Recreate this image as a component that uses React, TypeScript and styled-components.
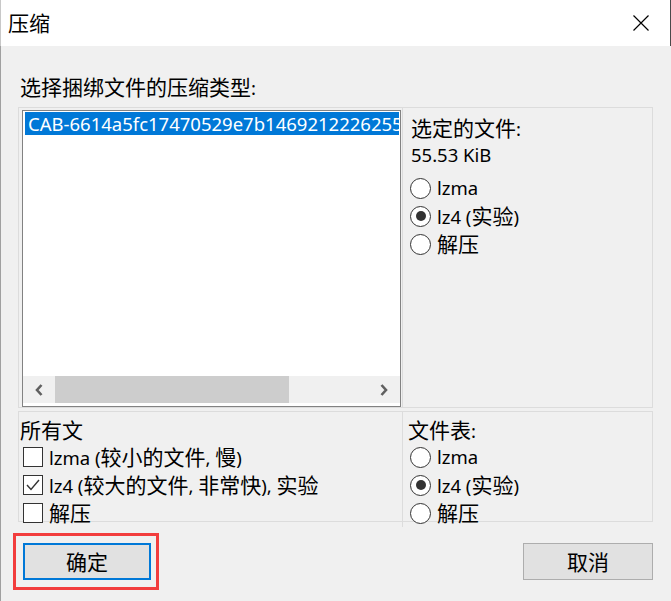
import React from "react";
import styled, { createGlobalStyle } from "styled-components";

const GlobalStyle = createGlobalStyle`
  html, body { margin: 0; padding: 0; background: #f0f0f0; }
  body { font-family: "Noto Sans", "Noto Sans CJK SC", sans-serif; }
  * { box-sizing: border-box; }
`;

const Window = styled.div`
  width: 671px;
  height: 601px;
  display: flex;
  flex-direction: column;
  background: #f0f0f0;
  overflow: hidden;
  font-family: "Noto Sans", "Noto Sans CJK SC", sans-serif;
  font-size: 18.5px;
  color: #000;
`;

const Cjk = styled.span`
  font-family: "Noto Sans CJK SC", sans-serif;
  font-size: 21px;
`;

const Mixed = ({ text }: { text: string }) => (
  <>
    {text
      .split(/([\u3000-\u9fff\uff00-\uffef]+)/)
      .map((part, i) => (i % 2 === 1 ? <Cjk key={i}>{part}</Cjk> : part))}
  </>
);

const TitleBar = styled.div`
  height: 46px;
  flex: none;
  background: #fff;
  display: flex;
  align-items: center;
  justify-content: space-between;
  padding-left: 7px;
  padding-right: 21px;
  border-left: 1px solid #c8c8c8;
  border-right: 1px solid #4a4a4a;
`;

const Title = styled.span`
  line-height: 28px;
`;

const Body = styled.div`
  flex: 1;
  display: flex;
  flex-direction: column;
  padding: 0 18px 0 17px;
  border-left: 1px solid #a0a0a0;
`;

const Label = styled.div`
  margin-top: 26px;
  padding-left: 2px;
  line-height: 28px;
  height: 28px;
`;

const Group = styled.div<{ $height: number; $top: number }>`
  margin-top: ${(p) => p.$top}px;
  height: ${(p) => p.$height}px;
  display: grid;
  grid-template-columns: 383px 1fr;
  border: 1px solid #dcdcdc;
`;

const ListBox = styled.div`
  margin: 2px 1px 0 3px;
  border: 1px solid #828282;
  background: #fff;
  display: flex;
  flex-direction: column;
  min-width: 0;
  overflow: hidden;
`;

const SelectedItem = styled.div`
  margin: 1px 1px 0 2px;
  height: 23px;
  line-height: 23px;
  background: #0078d7;
  color: #fff;
  padding-left: 3px;
  white-space: nowrap;
  overflow: hidden;
`;

const ListSpacer = styled.div`
  flex: 1;
`;

const ScrollBar = styled.div`
  height: 27px;
  margin-bottom: 3px;
  background: #f0f0f0;
  display: flex;
  align-items: stretch;
`;

const ScrollArrow = styled.div`
  width: 32px;
  flex: none;
  display: flex;
  align-items: center;
  justify-content: center;
`;

const ScrollTrack = styled.div`
  flex: 1;
  display: flex;
`;

const ScrollThumb = styled.div`
  width: 234px;
  background: #cdcdcd;
`;

const SidePanel = styled.div<{ $pad: number; $top: number }>`
  border-left: 1px solid #dcdcdc;
  padding-left: ${(p) => p.$pad}px;
  padding-top: ${(p) => p.$top}px;
  display: flex;
  flex-direction: column;
`;

const Line = styled.div<{ $mt?: number }>`
  line-height: 28px;
  height: 28px;
  margin-top: ${(p) => p.$mt ?? 0}px;
  white-space: nowrap;
`;

const OptionRow = styled.label<{ $mt?: number; $ml?: number }>`
  display: flex;
  align-items: center;
  height: 28px;
  margin-top: ${(p) => p.$mt ?? 0}px;
  margin-left: ${(p) => p.$ml ?? 0}px;
  white-space: nowrap;
`;

const OptionText = styled.span`
  line-height: 28px;
`;

const RadioCircle = styled.span<{ $checked?: boolean }>`
  width: 21px;
  height: 21px;
  border-radius: 50%;
  border: 1px solid #333;
  background: #fff;
  margin-right: 6px;
  display: flex;
  align-items: center;
  justify-content: center;
  flex: none;
  &::after {
    content: "";
    width: 10px;
    height: 10px;
    border-radius: 50%;
    background: ${(p) => (p.$checked ? "#333" : "transparent")};
  }
`;

const CheckBox = styled.span`
  width: 20px;
  height: 20px;
  border: 1px solid #333;
  background: #fff;
  margin-left: 3px;
  margin-right: 6px;
  flex: none;
  display: flex;
  align-items: center;
  justify-content: center;
`;

const LeftPanel = styled.div`
  padding-top: 3px;
  padding-left: 1px;
  display: flex;
  flex-direction: column;
`;

const Footer = styled.div`
  margin-top: 21px;
  display: flex;
  justify-content: space-between;
  align-items: flex-start;
  padding-left: 5px;
`;

const Annotated = styled.div`
  position: relative;
`;

const Highlight = styled.div`
  position: absolute;
  left: -10px;
  right: -8px;
  top: -10px;
  bottom: -10px;
  border: 3px solid #f23d3d;
  pointer-events: none;
`;

const Button = styled.button<{ $primary?: boolean }>`
  height: 37px;
  width: ${(p) => (p.$primary ? 128 : 130)}px;
  background: #e1e1e1;
  border: ${(p) => (p.$primary ? "2px solid #0078d7" : "1px solid #adadad")};
  font-family: "Noto Sans CJK SC", sans-serif;
  font-size: 21px;
  color: #000;
  padding: 0;
  line-height: 1;
  display: flex;
  align-items: center;
  justify-content: center;
`;

const Radio = ({ checked, label, mt, ml }: { checked?: boolean; label: string; mt?: number; ml?: number }) => (
  <OptionRow $mt={mt} $ml={ml}>
    <RadioCircle $checked={checked} />
    <OptionText>
      <Mixed text={label} />
    </OptionText>
  </OptionRow>
);

const Check = ({ checked, label }: { checked?: boolean; label: string }) => (
  <OptionRow>
    <CheckBox>
      {checked && (
        <svg width="16" height="16" viewBox="0 0 16 16">
          <polyline points="2,8 6,12.5 14,3" fill="none" stroke="#333" strokeWidth="1.4" />
        </svg>
      )}
    </CheckBox>
    <OptionText>
      <Mixed text={label} />
    </OptionText>
  </OptionRow>
);

export default function App() {
  return (
    <>
      <GlobalStyle />
      <Window>
        <TitleBar>
          <Title>
            <Mixed text="压缩" />
          </Title>
          <svg width="16" height="16" viewBox="0 0 16 16">
            <path d="M0.5 0.5 L15.5 15.5 M15.5 0.5 L0.5 15.5" stroke="#000" strokeWidth="1.2" fill="none" />
          </svg>
        </TitleBar>
        <Body>
          <Label>
            <Mixed text="选择捆绑文件的压缩类型:" />
          </Label>
          <Group $top={7} $height={301}>
            <ListBox>
              <SelectedItem>CAB-6614a5fc17470529e7b14692122262555a</SelectedItem>
              <ListSpacer />
              <ScrollBar>
                <ScrollArrow>
                  <svg width="10" height="14" viewBox="0 0 10 14">
                    <polyline points="7.5,2 3,7 7.5,12" fill="none" stroke="#606060" strokeWidth="2.6" />
                  </svg>
                </ScrollArrow>
                <ScrollTrack>
                  <ScrollThumb />
                </ScrollTrack>
                <ScrollArrow>
                  <svg width="10" height="14" viewBox="0 0 10 14">
                    <polyline points="2.5,2 7,7 2.5,12" fill="none" stroke="#606060" strokeWidth="2.6" />
                  </svg>
                </ScrollArrow>
              </ScrollBar>
            </ListBox>
            <SidePanel $pad={8} $top={5}>
              <Line>
                <Mixed text="选定的文件:" />
              </Line>
              <Line>55.53 KiB</Line>
              <Radio label="lzma" mt={5} ml={-1} />
              <Radio label="lz4 (实验)" checked ml={-1} />
              <Radio label="解压" ml={-1} />
            </SidePanel>
          </Group>
          <Group $top={3} $height={111}>
            <LeftPanel>
              <Line>
                <Mixed text="所有文" />
              </Line>
              <Check label="lzma (较小的文件, 慢)" />
              <Check label="lz4 (较大的文件, 非常快), 实验" checked />
              <Check label="解压" />
            </LeftPanel>
            <SidePanel $pad={5} $top={3}>
              <Line>
                <Mixed text="文件表:" />
              </Line>
              <Radio label="lzma" ml={2} />
              <Radio label="lz4 (实验)" checked ml={2} />
              <Radio label="解压" ml={2} />
            </SidePanel>
          </Group>
          <Footer>
            <Annotated>
              <Button $primary>确定</Button>
              <Highlight />
            </Annotated>
            <Button>取消</Button>
          </Footer>
        </Body>
      </Window>
    </>
  );
}
